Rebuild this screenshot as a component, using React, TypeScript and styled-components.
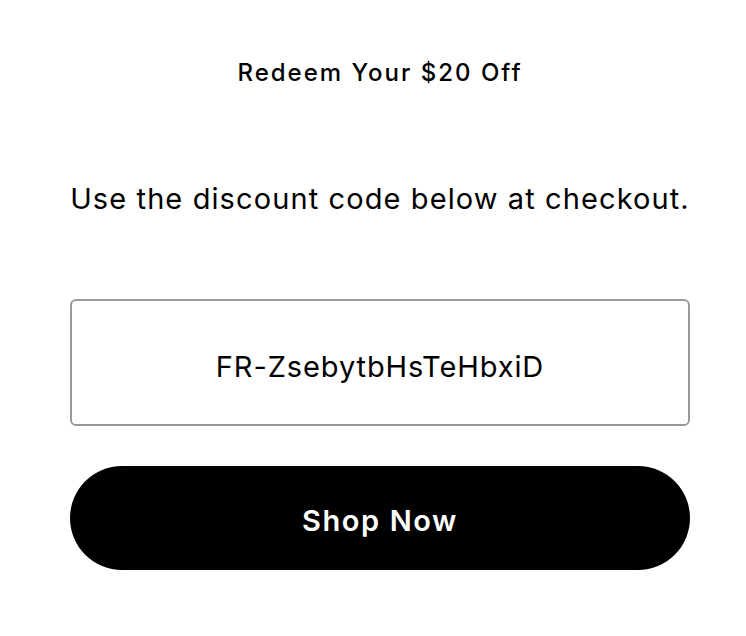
import styled, { createGlobalStyle } from 'styled-components';

const GlobalStyle = createGlobalStyle`
  body {
    margin: 0;
    background: #fff;
    font-family: Inter, 'Liberation Sans', sans-serif;
    color: #000;
  }
`;

export default function App() {
  return (
    <>
      <GlobalStyle />
      <Page>
        <Title>Redeem Your $20 Off</Title>
        <Subtitle>Use the discount code below at checkout.</Subtitle>
        <CodeBox>FR-ZsebytbHsTeHbxiD</CodeBox>
        <ShopButton type="button">Shop Now</ShopButton>
      </Page>
    </>
  );
}

const Page = styled.div`
  display: flex;
  flex-direction: column;
  align-items: stretch;
  padding: 58px 56px 0 70px;
`;

const Title = styled.h1`
  margin: 0;
  font-size: 24px;
  line-height: 30px;
  font-weight: 500;
  letter-spacing: 2px;
  text-align: center;
`;

const Subtitle = styled.p`
  margin: 93px 0 0;
  font-size: 29px;
  line-height: 36px;
  font-weight: 400;
  letter-spacing: 1.1px;
  text-align: center;
`;

const CodeBox = styled.div`
  margin-top: 82px;
  height: 127px;
  box-sizing: border-box;
  padding-top: 7px;
  border: 2px solid #9a9a9a;
  border-radius: 6px;
  display: flex;
  align-items: center;
  justify-content: center;
  font-size: 29px;
  letter-spacing: 0.9px;
`;

const ShopButton = styled.button`
  margin-top: 40px;
  height: 104px;
  padding-top: 6px;
  border: none;
  border-radius: 52px;
  background: #000;
  color: #fff;
  font-family: inherit;
  font-size: 29px;
  font-weight: 600;
  letter-spacing: 1.6px;
  cursor: pointer;
`;
